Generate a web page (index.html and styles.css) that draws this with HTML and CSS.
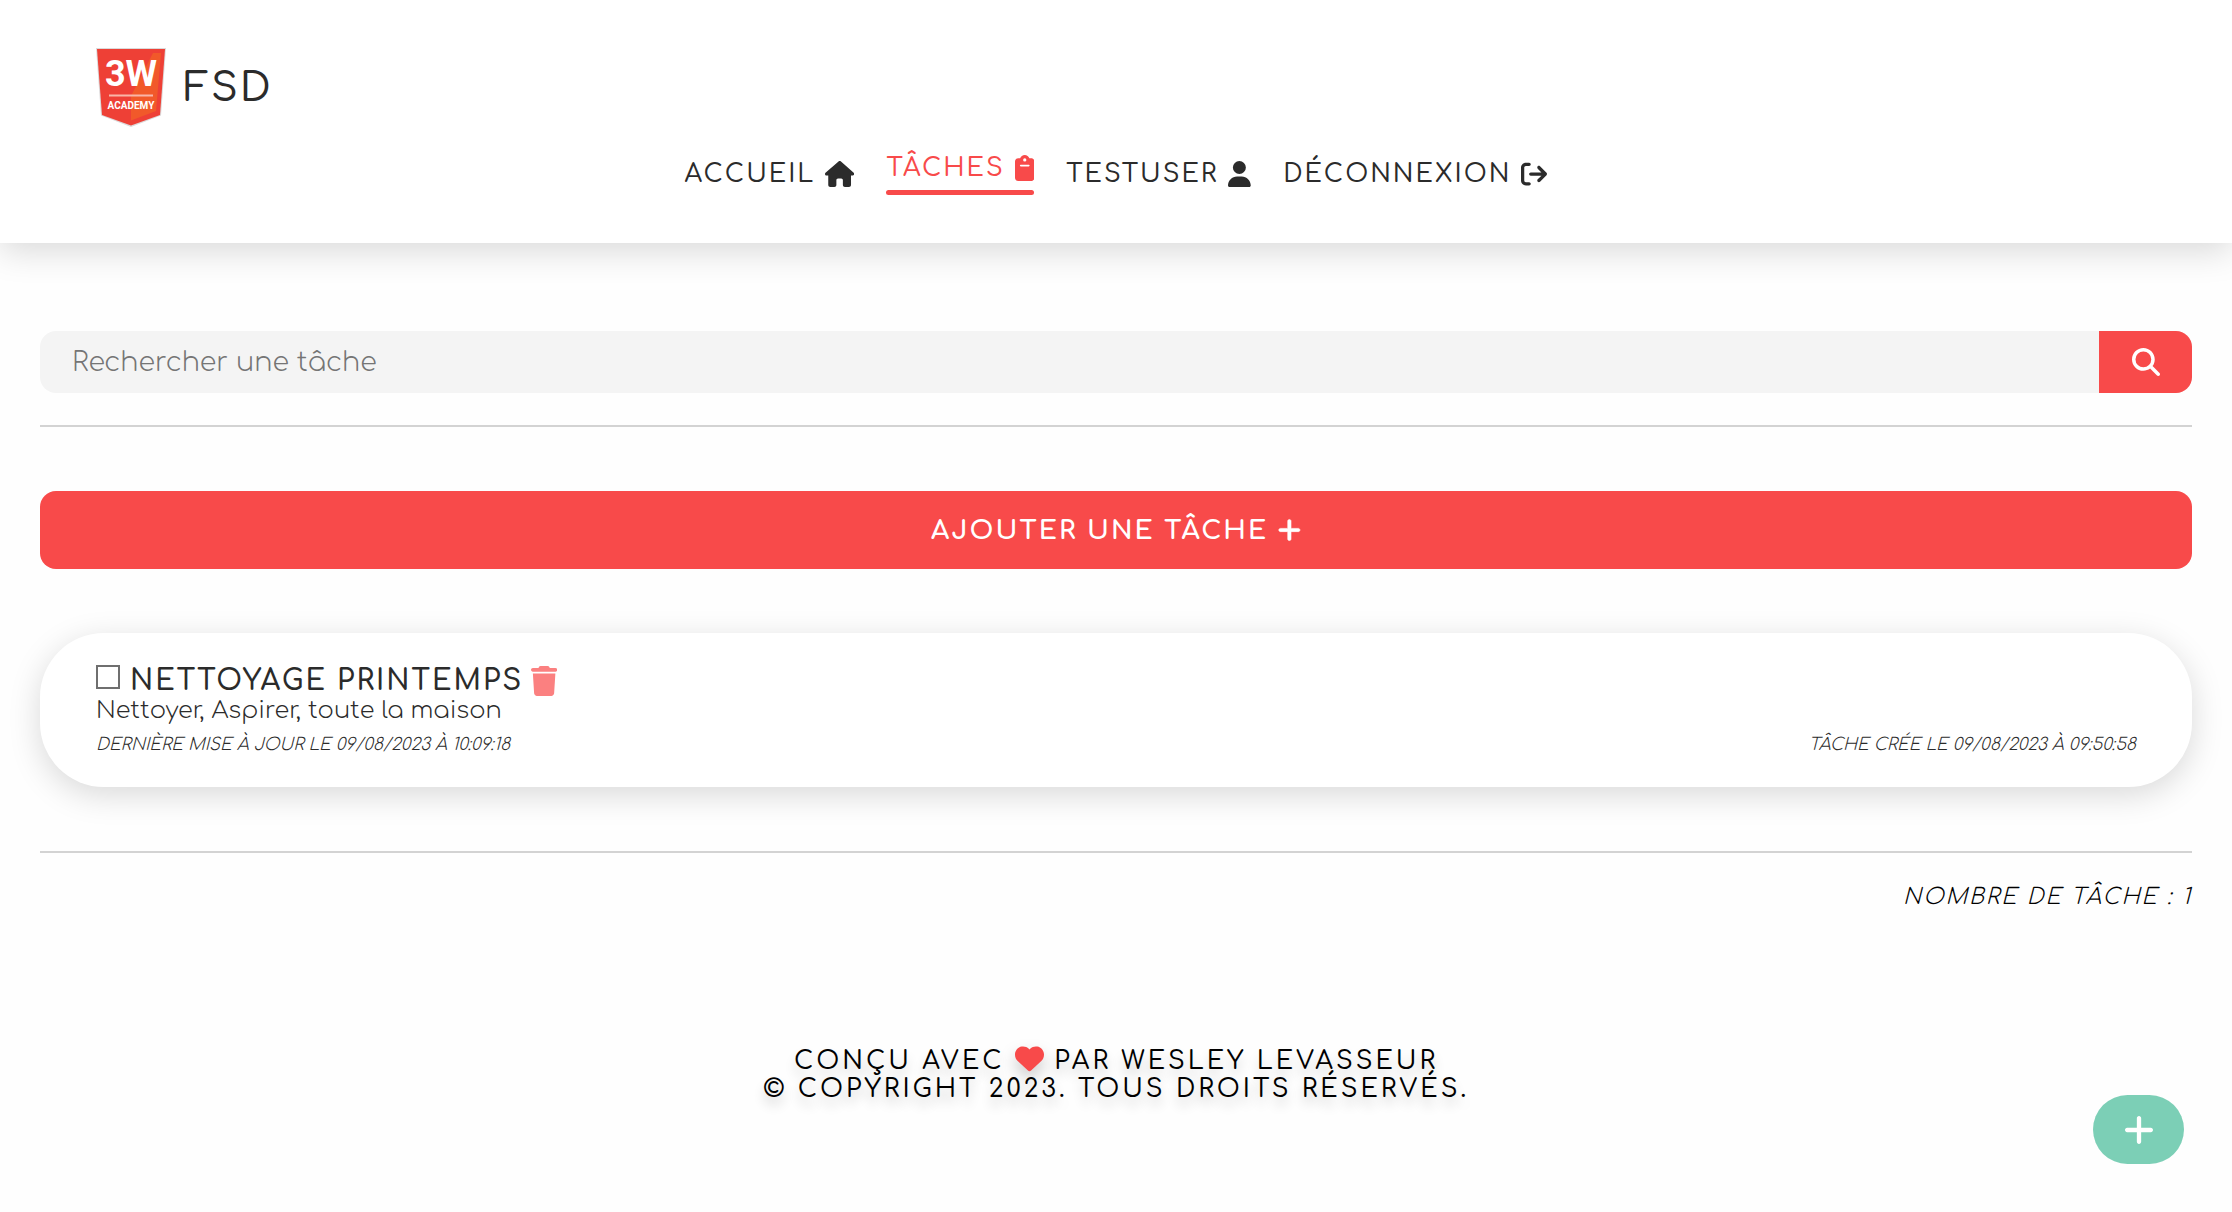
FILE: index.html
```html
<!DOCTYPE html>
<html lang="fr">
<head>
<meta charset="utf-8">
<meta name="viewport" content="width=device-width, initial-scale=1">
<title>FSD - Tâches</title>
<link rel="stylesheet" href="styles.css">
</head>
<body>
<header class="header">
  <a class="brand" href="#">
    <svg class="brand-logo" viewBox="0 0 70 79" role="img" aria-label="3W Academy">
      <path fill="#dcd9da" d="M0 0H70L65 67.500L35 79L5 67.500Z"/>
      <path fill="#ee4036" d="M1 1H69L64 67L35 77.500L6 67Z"/>
      <path fill="#f1592a" d="M57 5H65L60 63L35 72.500V48Z"/>
      <text class="logo-big" x="35" y="38" text-anchor="middle">3W</text>
      <path fill="#f9b5a8" d="M13 46.500H57V48.500H13Z"/>
      <text class="logo-small" x="35" y="61" text-anchor="middle">ACADEMY</text>
    </svg>
    <span>FSD</span>
  </a>
  <nav class="nav">
    <a class="nav-link" href="#"><span>Accueil</span>
      <svg class="icon" viewBox="0 0 576 512"><path d="M575.800 255.500c0 18-15 32.100-32 32.100h-32l.7 160.200c0 2.700-.2 5.400-.5 8.100V472c0 22.100-17.900 40-40 40H392c-22.100 0-40-17.900-40-40V376c0-17.700-14.300-32-32-32H256c-17.700 0-32 14.300-32 32v96c0 22.100-17.900 40-40 40H104c-22.100 0-40-17.900-40-40V287.600H32c-18 0-32-14-32-32.100c0-9 3-17 10-24L266.400 8c7-7 15-8 22-8s15 2 21 7L564.800 231.500c8 7 12 15 11 24z"/></svg></a>
    <a class="nav-link active" href="#" aria-current="page"><span>Tâches</span>
      <svg class="icon" viewBox="0 0 384 512"><path d="M192 0c-41.800 0-77.400 26.700-90.500 64H64C28.700 64 0 92.700 0 128V448c0 35.300 28.700 64 64 64H320c35.300 0 64-28.700 64-64V128c0-35.300-28.700-64-64-64H282.500C269.400 26.700 233.800 0 192 0zm0 64a32 32 0 1 1 0 64 32 32 0 1 1 0-64zM112 192H272c8.800 0 16 7.200 16 16s-7.200 16-16 16H112c-8.800 0-16-7.200-16-16s7.200-16 16-16z"/></svg></a>
    <a class="nav-link" href="#"><span>TestUser</span>
      <svg class="icon" viewBox="0 0 448 512"><path d="M224 256A128 128 0 1 0 224 0a128 128 0 1 0 0 256zm-45.700 48C79.800 304 0 383.800 0 482.300C0 498.700 13.300 512 29.700 512H418.300c16.400 0 29.700-13.300 29.700-29.700C448 383.800 368.200 304 269.700 304H178.300z"/></svg></a>
    <a class="nav-link" href="#"><span>Déconnexion</span>
      <svg class="icon" viewBox="0 0 512 512"><path d="M502.600 278.600c12.500-12.500 12.500-32.800 0-45.300l-128-128c-12.500-12.500-32.800-12.500-45.300 0s-12.500 32.800 0 45.300L402.700 224 192 224c-17.700 0-32 14.300-32 32s14.300 32 32 32l210.700 0-73.400 73.400c-12.500 12.500-12.500 32.800 0 45.300s32.800 12.500 45.300 0l128-128zM160 96c17.700 0 32-14.300 32-32s-14.300-32-32-32L96 32C43 32 0 75 0 128L0 384c0 53 43 96 96 96l64 0c17.700 0 32-14.300 32-32s-14.300-32-32-32l-64 0c-17.700 0-32-14.300-32-32l0-256c0-17.700 14.300-32 32-32l64 0z"/></svg></a>
  </nav>
</header>

<main class="main">
  <form class="search">
    <input class="search-input" type="search" placeholder="Rechercher une tâche" aria-label="Rechercher une tâche">
    <button class="search-button" type="button" aria-label="Rechercher">
      <svg class="icon" viewBox="0 0 512 512"><path d="M416 208c0 45.900-14.900 88.300-40 122.700L502.600 457.400c12.500 12.500 12.500 32.800 0 45.300s-32.800 12.500-45.300 0L330.700 376c-34.400 25.200-76.800 40-122.700 40C93.100 416 0 322.900 0 208S93.100 0 208 0S416 93.100 416 208zM208 352a144 144 0 1 0 0-288 144 144 0 1 0 0 288z"/></svg>
    </button>
  </form>
  <hr class="rule">
  <button class="add-button" type="button"><span>Ajouter une tâche</span>
    <svg class="icon" viewBox="0 0 448 512"><path stroke="currentColor" stroke-width="12" d="M256 80c0-17.700-14.300-32-32-32s-32 14.300-32 32V224H48c-17.700 0-32 14.300-32 32s14.300 32 32 32H192V432c0 17.700 14.300 32 32 32s32-14.300 32-32V288H400c17.700 0 32-14.300 32-32s-14.300-32-32-32H256V80z"/></svg>
  </button>
  <article class="task">
    <div class="task-head">
      <input class="task-check" type="checkbox" id="task-1">
      <label class="task-title" for="task-1">Nettoyage printemps</label>
      <button class="task-delete" type="button" aria-label="Supprimer">
        <svg class="icon" viewBox="0 0 448 512"><path d="M135.200 17.700L128 32H32C14.300 32 0 46.300 0 64S14.300 96 32 96H416c17.700 0 32-14.300 32-32s-14.300-32-32-32H320l-7.200-14.300C307.400 6.800 296.300 0 284.200 0H163.800c-12.100 0-23.200 6.800-28.600 17.700zM416 128H32L53.200 467c1.600 25.300 22.600 45 47.900 45H346.900c25.300 0 46.300-19.700 47.900-45L416 128z"/></svg>
      </button>
    </div>
    <p class="task-text">Nettoyer, Aspirer, toute la maison</p>
    <div class="task-dates">
      <em>Dernière mise à jour le 09/08/2023 à 10:09:18</em>
      <em>Tâche crée le 09/08/2023 à 09:50:58</em>
    </div>
  </article>
  <hr class="rule">
  <p class="count">Nombre de tâche : 1</p>
</main>

<footer class="footer">
  <p>Conçu avec
    <svg class="icon heart" viewBox="0 0 512 512" role="img" aria-label="amour"><path d="M47.600 300.400L228.300 469.100c7.500 7 17.400 10.900 27.700 10.900s20.200-3.900 27.700-10.900L464.400 300.400c30.400-28.300 47.600-68 47.600-109.500v-5.800c0-69.900-50.500-129.500-119.400-141C347 36.500 300.600 51.400 268 84L256 96 244 84c-32.600-32.600-79-47.500-124.600-39.900C50.500 55.600 0 115.200 0 185.100v5.800c0 41.500 17.200 81.200 47.600 109.500z"/></svg>
    par Wesley Levasseur</p>
  <p>© Copyright 2023. Tous droits réservés.</p>
</footer>

<button class="fab" type="button" aria-label="Ajouter une tâche">
  <svg class="icon" viewBox="16 48 416 416"><path d="M256 80c0-17.700-14.300-32-32-32s-32 14.300-32 32V224H48c-17.700 0-32 14.300-32 32s14.300 32 32 32H192V432c0 17.700 14.300 32 32 32s32-14.300 32-32V288H400c17.700 0 32-14.300 32-32s-14.300-32-32-32H256V80z"/></svg>
</button>
</body>
</html>
```
FILE: styles.css
```css
:root {
  --red: #f84a4a;
  --ink: #2b2b2b;
  --shadow: 0 8px 32px rgba(0, 0, 0, 0.15);
}

* {
  box-sizing: border-box;
  margin: 0;
  padding: 0;
}

body {
  font-family: Comfortaa, Lato, sans-serif;
  font-weight: 350;
  color: var(--ink);
  background: #fefefe;
}

a {
  color: inherit;
  text-decoration: none;
}

button {
  font: inherit;
  border: 0;
  cursor: pointer;
}

.icon {
  height: 26px;
  fill: currentColor;
  flex: none;
}

.header {
  padding: 48px 96px;
  background: #fff;
  box-shadow: var(--shadow);
}

.brand {
  display: inline-flex;
  align-items: center;
  gap: 18px;
  height: 79px;
  font-size: 40px;
  font-weight: 500;
  letter-spacing: 2px;
}

.brand-logo {
  width: 70px;
  height: 79px;
}

.logo-big,
.logo-small {
  font-family: Roboto, sans-serif;
  font-weight: 700;
  letter-spacing: 0;
  fill: #fff;
}

.logo-big {
  font-size: 36px;
}

.logo-small {
  font-size: 10px;
}

.nav {
  display: flex;
  flex-wrap: wrap;
  justify-content: center;
  align-items: center;
  gap: 32px;
  margin-top: 22px;
}

.nav-link {
  display: grid;
  grid-template-columns: auto auto;
  align-items: center;
  column-gap: 10px;
  font-size: 25px;
  font-weight: 500;
  line-height: 30px;
  letter-spacing: 2px;
  text-transform: uppercase;
}

.nav-link.active {
  row-gap: 7px;
  color: var(--red);
}

.nav-link.active::after {
  content: "";
  grid-column: 1 / -1;
  height: 5px;
  border-radius: 4px;
  background: currentColor;
}

.main {
  padding: 88px 40px 0;
}

.search {
  display: flex;
  height: 62px;
  border-radius: 16px;
  overflow: hidden;
  background: #f4f4f4;
}

.search-input {
  flex: 1;
  min-width: 0;
  padding: 0 32px;
  border: 0;
  font: inherit;
  font-size: 27px;
  background: transparent;
}

.search-input::placeholder {
  color: #757575;
}

.search-button {
  display: grid;
  place-items: center;
  width: 93px;
  color: #fff;
  background: var(--red);
}

.search-button .icon,
.fab .icon {
  height: 28px;
}

.rule {
  height: 2px;
  margin: 32px 0 64px;
  border: 0;
  background: #d3d3d3;
}

.add-button {
  display: flex;
  justify-content: center;
  align-items: center;
  gap: 10px;
  width: 100%;
  height: 78px;
  border-radius: 16px;
  color: #fff;
  background: var(--red);
  font-size: 26px;
  font-weight: 700;
  letter-spacing: 2px;
  text-transform: uppercase;
}

.task {
  margin: 64px 0;
  padding: 32px 56px 30px;
  border-radius: 64px;
  background: #fff;
  box-shadow: var(--shadow);
}

.task-head {
  display: flex;
  align-items: center;
  height: 32px;
}

.task-check {
  appearance: none;
  align-self: flex-start;
  width: 24px;
  height: 24px;
  margin-right: 10px;
  border: 2px solid #6f6f6f;
  background: #fff;
}

.task-title {
  font-size: 28px;
  font-weight: 600;
  line-height: 32px;
  letter-spacing: 2px;
  text-transform: uppercase;
}

.task-delete {
  display: flex;
  margin-left: 8px;
  color: #fb8080;
  background: transparent;
}

.task-delete .icon {
  height: 30px;
}

.task-text {
  font-size: 24px;
  line-height: 28px;
}

.task-dates {
  display: flex;
  justify-content: space-between;
  margin-top: 8px;
  font-size: 17px;
  line-height: 24px;
  text-transform: uppercase;
}

.rule + .count {
  margin-top: -36px;
}

.count {
  font-size: 22px;
  line-height: 32px;
  font-style: italic;
  letter-spacing: 2px;
  text-align: right;
  text-transform: uppercase;
  color: #000;
}

.footer {
  padding: 134px 40px 96px;
  color: #000;
  font-size: 25px;
  font-weight: 500;
  line-height: 28px;
  letter-spacing: 3px;
  text-align: center;
  text-transform: uppercase;
  text-shadow: 0 8px 12px rgba(0, 0, 0, 0.2);
}

.heart {
  height: 29px;
  vertical-align: middle;
  margin: -8px 0 0;
  color: var(--red);
  filter: drop-shadow(0 8px 8px rgba(0, 0, 0, 0.2));
}

.fab {
  position: fixed;
  right: 48px;
  bottom: 48px;
  display: grid;
  place-items: center;
  width: 91px;
  height: 69px;
  border-radius: 35px;
  color: #fff;
  background: #7ccfb6;
}
```
